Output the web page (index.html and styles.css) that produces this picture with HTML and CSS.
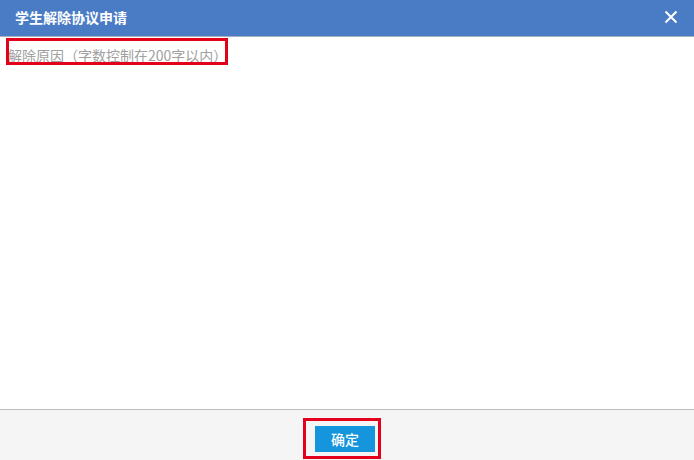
FILE: index.html
```html
<!DOCTYPE html>
<html lang="zh">
<head>
<meta charset="utf-8">
<link rel="stylesheet" href="styles.css">
</head>
<body>
<div class="dialog">
  <div class="header">
    <span class="title">学生解除协议申请</span>
    <svg class="close" width="14" height="14" viewBox="0 0 14 14"><path d="M1.5 1.5L12.5 12.5M12.5 1.5L1.5 12.5" stroke="#fff" stroke-width="2" fill="none"/></svg>
  </div>
  <div class="content">
    <div class="area">
      <span class="placeholder">解除原因（字数控制在200字以内）</span>
      <span class="mark mark-text"></span>
    </div>
  </div>
  <div class="footer">
    <div class="btn-wrap">
      <button class="btn">确定</button>
      <span class="mark mark-btn"></span>
    </div>
  </div>
</div>
</body>
</html>
```

FILE: styles.css
```css
html, body {
  margin: 0;
  padding: 0;
  background: #fff;
}
body {
  font-family: "Noto Sans CJK SC", "Liberation Sans", sans-serif;
  width: 694px;
  height: 460px;
  overflow: hidden;
}
.dialog {
  display: flex;
  flex-direction: column;
  height: 460px;
}
.header {
  height: 36px;
  background: #4a7cc6;
  border-bottom: 1px solid #a8b3c2;
  display: flex;
  align-items: center;
  justify-content: space-between;
  padding: 0 16px 0 15px;
  flex-shrink: 0;
}
.title {
  color: #fff;
  font-size: 14px;
  font-weight: bold;
  line-height: 20px;
  margin-top: -3px;
}
.close {
  display: block;
  margin-top: -3px;
}
.content {
  flex: 1;
  padding: 5px 0 0 8px;
}
.area {
  position: relative;
  display: inline-block;
}
.placeholder {
  color: #a0a0a0;
  font-size: 14px;
  line-height: 20px;
}
.mark {
  position: absolute;
  border: 3px solid #e3001b;
  box-sizing: border-box;
}
.mark-text {
  left: -2px;
  top: -4px;
  width: 222px;
  height: 27px;
}
.footer {
  flex-shrink: 0;
  border-top: 1px solid #bdbdbd;
  background: #f5f5f5;
  display: flex;
  justify-content: center;
  padding-top: 16px;
  box-sizing: border-box;
  height: 51px;
}
.btn-wrap {
  position: relative;
  height: 26px;
  margin-left: -4px;
}
.btn {
  width: 60px;
  height: 26px;
  border: none;
  background: #1595dc;
  color: #fff;
  font-family: "Noto Sans CJK SC", sans-serif;
  font-size: 14px;
  font-weight: 500;
  padding: 0;
  line-height: 26px;
}
.mark-btn {
  left: -12px;
  top: -8px;
  width: 78px;
  height: 41px;
}
```
